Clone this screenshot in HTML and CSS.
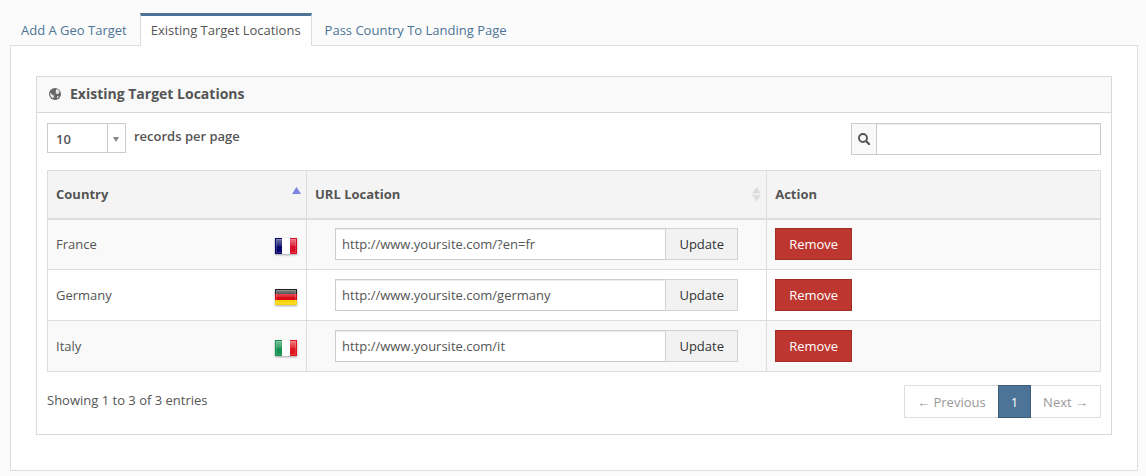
FILE: index.html
```html
<!DOCTYPE html>
<html lang="en">
<head>
<meta charset="utf-8">
<meta name="viewport" content="width=device-width, initial-scale=1">
<title>Existing Target Locations</title>
<link rel="stylesheet" href="styles.css">
</head>
<body>
<svg class="defs" aria-hidden="true">
  <defs>
    <linearGradient id="gloss" x1="0" y1="0" x2="0" y2="1">
      <stop offset="0" stop-color="#fff" stop-opacity=".42"/>
      <stop offset="1" stop-color="#fff" stop-opacity=".12"/>
    </linearGradient>
    <g id="shine">
      <rect x="1.5" y="1.5" width="19" height="13" fill="none" stroke="#fff" stroke-opacity=".16"/>
      <rect x="1" y="1" width="20" height="7" fill="url(#gloss)"/>
    </g>
  </defs>
</svg>
<nav class="tabs">
  <a class="tab" href="#add">Add A Geo Target</a>
  <a class="tab tab-active" href="#existing" aria-current="page">Existing Target Locations</a>
  <a class="tab" href="#pass">Pass Country To Landing Page</a>
</nav>
<main class="tab-content">
  <section class="widget">
    <header class="widget-header">
      <svg class="globe" viewBox="0 0 12 12" aria-hidden="true">
        <circle cx="6" cy="6" r="6" fill="#666"/>
        <path d="M6.800 1.600 8.500 1.300 10 2.600 10.800 4.200 9.800 4.600 9.900 5.700 8.900 6.300 8.300 5.500 7.200 6 6.500 5.200 7.200 4.500 6.300 3.900 7.100 3zM1.200 4.800 2.200 5.400 3.300 6.800 4.900 7.500 5.400 8.300 4.400 9.200 4.200 10.600C2.500 9.900 1.200 8.200 1.100 6.300zM8 8.300 9.700 8 9.300 9.400 8 10.300z" fill="#f4f4f4" opacity=".9"/>
      </svg>
      <h1 class="widget-title">Existing Target Locations</h1>
    </header>
    <div class="widget-content">
      <div class="toolbar">
        <label class="length">
          <span class="select-wrap">
            <select class="select"><option>10</option><option>25</option><option>50</option></select>
          </span>
          records per page
        </label>
        <div class="search">
          <label class="search-addon" for="search" aria-label="Search">
            <svg class="search-icon" viewBox="0 0 12 12" aria-hidden="true"><circle cx="5" cy="5" r="4" fill="none" stroke="#555" stroke-width="1.9"/><path d="m8 8 3.200 3.200" stroke="#555" stroke-width="2.200" stroke-linecap="round"/></svg>
          </label>
          <input class="input search-input" id="search" type="text">
        </div>
      </div>
      <table class="table">
        <colgroup><col class="col-country"><col class="col-url"><col></colgroup>
        <thead>
          <tr>
            <th scope="col" aria-sort="ascending"><div class="head-cell">Country
              <svg class="sort" viewBox="0 0 9 16" aria-hidden="true"><path d="M4.500 1 9 8H0z" fill="#7f83e0"/></svg></div></th>
            <th scope="col"><div class="head-cell">URL Location
              <svg class="sort" viewBox="0 0 9 16" aria-hidden="true"><path d="M4.500 1 9 7.500H0zM4.500 15.500 9 9H0z" fill="#dcdcdc"/></svg></div></th>
            <th scope="col">Action</th>
          </tr>
        </thead>
        <tbody>
          <tr>
            <td><div class="country">France
              <svg class="flag" viewBox="0 0 22 16" role="img" aria-label="Flag of France"><path fill="#07076b" d="M0 0h7v16H0z"/><path fill="#fff" d="M7 0h8v16H7z"/><path fill="#d90d25" d="M15 0h7v16h-7z"/><use href="#shine"/></svg></div></td>
            <td><form class="url-form"><input class="input url-input" type="text" aria-label="URL for France" value="http://www.yoursite.com/?en=fr"><button class="btn btn-update" type="button">Update</button></form></td>
            <td><button class="btn btn-remove" type="button">Remove</button></td>
          </tr>
          <tr>
            <td><div class="country">Germany
              <svg class="flag" viewBox="0 0 22 16" role="img" aria-label="Flag of Germany"><path fill="#222" d="M0 0h22v5H0z"/><path fill="#dc0b17" d="M0 5h22v6H0z"/><path fill="#fad507" d="M0 11h22v5H0z"/><use href="#shine"/></svg></div></td>
            <td><form class="url-form"><input class="input url-input" type="text" aria-label="URL for Germany" value="http://www.yoursite.com/germany"><button class="btn btn-update" type="button">Update</button></form></td>
            <td><button class="btn btn-remove" type="button">Remove</button></td>
          </tr>
          <tr>
            <td><div class="country">Italy
              <svg class="flag" viewBox="0 0 22 16" role="img" aria-label="Flag of Italy"><path fill="#159251" d="M0 0h7v16H0z"/><path fill="#fff" d="M7 0h8v16H7z"/><path fill="#e0141c" d="M15 0h7v16h-7z"/><use href="#shine"/></svg></div></td>
            <td><form class="url-form"><input class="input url-input" type="text" aria-label="URL for Italy" value="http://www.yoursite.com/it"><button class="btn btn-update" type="button">Update</button></form></td>
            <td><button class="btn btn-remove" type="button">Remove</button></td>
          </tr>
        </tbody>
      </table>
      <footer class="table-footer">
        <div class="info">Showing 1 to 3 of 3 entries</div>
        <nav class="pagination" aria-label="Pages">
          <a class="page" href="#prev">← Previous</a>
          <a class="page page-active" href="#1" aria-current="page">1</a>
          <a class="page" href="#next">Next →</a>
        </nav>
      </footer>
    </div>
  </section>
</main>
</body>
</html>
```
FILE: styles.css
```css
* { box-sizing: border-box; }
body {
  margin: 0;
  padding: 13px 8px 5px 10px;
  background: #fbfbfb;
  color: #555;
  font: 13px/18px "Open Sans", "Liberation Sans", sans-serif;
}
input, button, select { font: inherit; color: inherit; margin: 0; border-radius: 0; }
a { text-decoration: none; }
.defs { position: absolute; width: 0; height: 0; }

.tabs { display: flex; position: relative; z-index: 1; margin-bottom: -1px; }
.tab {
  padding: 5px 10px 7px;
  border: 1px solid transparent;
  border-top-width: 3px;
  border-bottom: 0;
  color: #4d7496;
}
.tab-active {
  margin-left: 2px;
  margin-right: 2px;
  background: #fff;
  border-color: #4d7496 #ddd #fff;
  color: #555;
}
.tab-content { background: #fff; border: 1px solid #ddd; padding: 30px 25px 35px; }

.widget { border: 1px solid #d9d9d9; }
.widget-header {
  display: flex;
  align-items: center;
  gap: 9px;
  height: 36px;
  padding: 0 12px 2px;
  background: #f9f9f9;
  border-bottom: 1px solid #d9d9d9;
}
.globe { width: 12px; height: 12px; }
.widget-title { margin: 0; font-size: 14px; line-height: 18px; font-weight: 700; }
.widget-content { padding: 10px 10px 16px; }

.toolbar { display: flex; justify-content: space-between; margin-bottom: 15px; }
.length { display: flex; gap: 8px; height: 30px; line-height: 26px; font-weight: 600; }
.select-wrap { position: relative; width: 79px; }
.select {
  appearance: none;
  width: 100%;
  height: 30px;
  padding: 2px 8px 0;
  background: #fff;
  border: 1px solid #ccc;
  line-height: 26px;
}
.select-wrap::before {
  content: "";
  position: absolute;
  top: 0;
  right: 18px;
  height: 30px;
  border-left: 1px solid #ccc;
}
.select-wrap::after {
  content: "";
  position: absolute;
  top: 14px;
  right: 7px;
  border: 3px solid transparent;
  border-top: 5px solid #888;
  border-bottom: 0;
}
.input {
  height: 32px;
  padding: 6px;
  background: #fff;
  border: 1px solid #ccc;
  box-shadow: inset 0 1px 1px rgba(0, 0, 0, .075);
}
.search { display: flex; width: 250px; }
.search-addon {
  display: flex;
  align-items: center;
  justify-content: center;
  width: 25px;
  background: #f9f9f9;
  border: 1px solid #ccc;
  border-right: 0;
}
.search-icon { width: 12px; height: 12px; }
.search-input { flex: 1; min-width: 0; }

.table { width: 100%; table-layout: fixed; border-collapse: collapse; border: 1px solid #ddd; }
.col-country { width: 24.6%; }
.col-url { width: 43.7%; }
.table th, .table td { padding: 0 8px; text-align: left; border: 1px solid #ddd; }
.table th { height: 48px; background: #f4f4f4; border-bottom-width: 2px; font-weight: 700; }
.table td { height: 51px; }
.table tbody tr:nth-child(odd) { background: #f9f9f9; }
.head-cell { display: flex; align-items: center; justify-content: space-between; margin-right: -3px; }
.sort { width: 9px; height: 16px; }
.country { display: flex; align-items: center; justify-content: space-between; }
.flag { width: 22px; height: 16px; margin: 3px 1px 0 0; box-shadow: 0 1px 2px rgba(0, 0, 0, .35); }
.url-form { display: flex; padding: 0 20px; }
.url-input { flex: 1; min-width: 0; }
.btn { height: 32px; padding: 0 13px; border: 1px solid; line-height: 18px; }
.btn-update { min-width: 73px; margin-left: -1px; background: #f2f2f2; border-color: #d2d2d2; color: #333; }
.btn-remove { display: block; background: #bd362f; border-color: #9f2d28; color: #fff; }

.table-footer { display: flex; justify-content: space-between; margin-top: 13px; }
.info { padding-top: 6px; }
.pagination { display: flex; }
.page { padding: 7px 12px 6px; border: 1px solid #ddd; background: #fff; color: #999; }
.page + .page { margin-left: -1px; }
.page-active { position: relative; background: #4d7496; border-color: #3d5c77; color: #fff; }
```
